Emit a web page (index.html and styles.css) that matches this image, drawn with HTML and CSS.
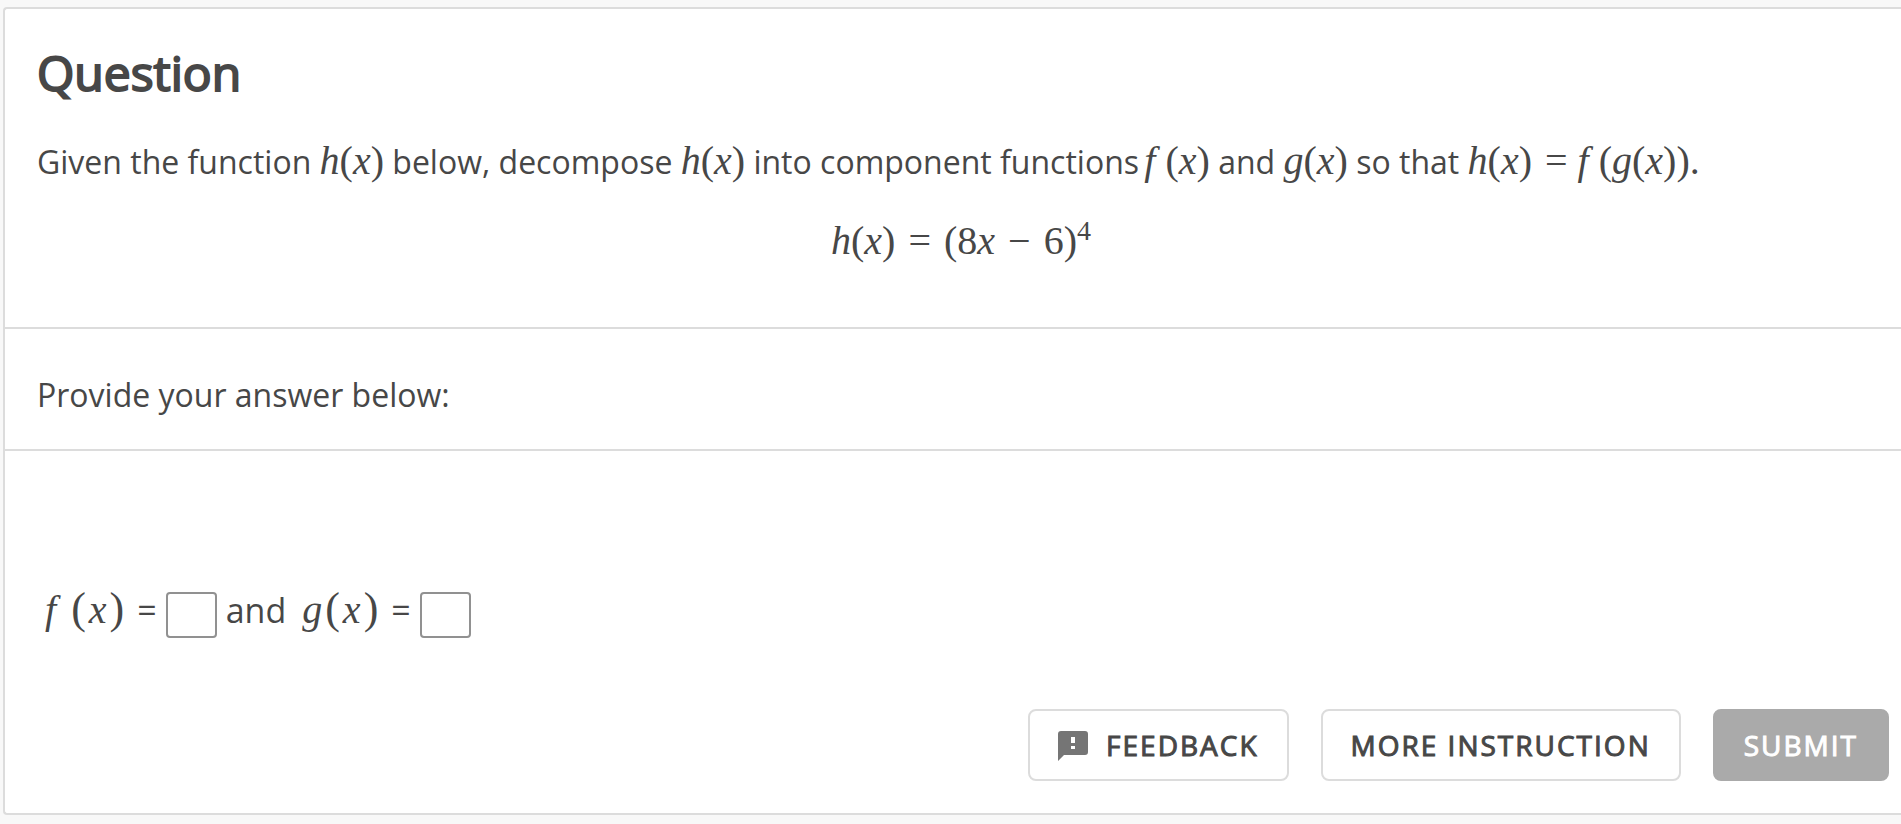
FILE: index.html
```html
<!DOCTYPE html>
<html lang="en">
<head>
<meta charset="utf-8">
<title>Question</title>
<link rel="stylesheet" href="styles.css">
</head>
<body>
<main class="card">
  <section class="question">
    <h1 class="title">Question</h1>
    <p class="prompt">Given the function <span class="math"><i>h</i>(<i>x</i>)</span> below, decompose <span class="math"><i>h</i>(<i>x</i>)</span> into component functions <span class="math"><i class="f">f</i>(<i>x</i>)</span> and <span class="math"><i>g</i>(<i>x</i>)</span> so that <span class="math"><i>h</i>(<i>x</i>) <span class="rel">=</span> <i class="f">f</i>(<i>g</i>(<i>x</i>)).</span></p>
    <p class="equation math"><i>h</i>(<i>x</i>) <span class="rel">=</span> (8<i>x</i> <span class="rel">−</span> 6)<sup>4</sup></p>
  </section>
  <section class="instruction">
    <p class="hint">Provide your answer below:</p>
  </section>
  <form class="answer">
    <div class="fields">
      <label class="fn" for="f-input"><span class="term"><i class="f">f</i><span class="paren">(</span><i>x</i><span class="paren">)</span></span><span class="eq">=</span></label>
      <input class="box" id="f-input" type="text">
      <span class="and">and</span>
      <label class="fn" for="g-input"><span class="term"><i>g</i><span class="paren">(</span><i>x</i><span class="paren">)</span></span><span class="eq">=</span></label>
      <input class="box" id="g-input" type="text">
    </div>
    <div class="actions">
      <button class="btn" type="button">
        <svg class="icon" viewBox="0 0 30 30" aria-hidden="true"><path fill="#757575" fill-rule="evenodd" d="M3 0H27Q30 0 30 3V21Q30 24 27 24H6L0 30V3Q0 0 3 0ZM13 6V12H17V6ZM13 15V18H17V15Z"/></svg>
        Feedback
      </button>
      <button class="btn" type="button">More Instruction</button>
      <button class="btn submit" type="submit" disabled>Submit</button>
    </div>
  </form>
</main>
</body>
</html>
```
FILE: styles.css
```css
* {
  box-sizing: border-box;
}

body {
  margin: 0;
  padding: 7px 0 9px 3px;
  background: #f8f8f8;
  color: #474747;
  font-family: "Open Sans", "Noto Sans", sans-serif;
  font-size: 32px;
  line-height: 48px;
}

.card {
  border: 2px solid #dcdcdc;
  border-right: 0;
  border-radius: 4px 0 0 4px;
  background: #fff;
}

.question {
  padding: 32px 16px 62px 32px;
  border-bottom: 2px solid #dcdcdc;
}

.title {
  margin: 0;
  font-size: 48px;
  font-weight: 400;
  line-height: 64px;
  -webkit-text-stroke: 2px currentColor;
}

.prompt {
  margin: 32px 0 31px;
}

.math,
.term {
  font-family: "Liberation Serif", serif;
  font-size: 40px;
  line-height: 48px;
}

.rel {
  margin: 0 3px;
}

.f {
  margin-right: 10px;
}

.prompt .f {
  margin-left: -3px;
}

.equation {
  margin: 0;
  text-align: center;
}

.equation sup {
  font-size: 28px;
  line-height: 0;
}

.instruction {
  padding: 42px 32px 30px;
  border-bottom: 2px solid #dcdcdc;
}

.hint {
  margin: 0;
}

.answer {
  padding: 134px 12px 32px 32px;
}

.fields {
  display: flex;
  align-items: baseline;
  padding-left: 8px;
  font-size: 34px;
}

.fn {
  display: flex;
  align-items: baseline;
}

.term {
  display: flex;
  align-items: baseline;
  gap: 3px;
}

.term .f {
  margin-right: 12px;
}

.paren {
  font-size: 44px;
}

.eq {
  margin: 0 9px 0 13px;
}

.and {
  margin: 0 16px 0 9px;
}

.box {
  align-self: flex-end;
  width: 51px;
  height: 46px;
  margin-bottom: -4px;
  padding: 0 4px;
  border: 2px solid #919191;
  border-radius: 4px;
  background: #fff;
  color: inherit;
  font: inherit;
}

.actions {
  display: flex;
  justify-content: flex-end;
  gap: 32px;
  margin-top: 75px;
}

.btn {
  display: flex;
  align-items: center;
  height: 72px;
  padding: 0 28px;
  border: 2px solid #dcdcdc;
  border-radius: 8px;
  background: #fff;
  color: #474747;
  font-family: inherit;
  font-size: 28px;
  font-weight: 400;
  letter-spacing: 2px;
  text-transform: uppercase;
  -webkit-text-stroke: 1px currentColor;
}

.icon {
  width: 30px;
  height: 30px;
  margin: 2px 18px 0 0;
}

.submit {
  padding: 0 29px;
  border-color: #aaa;
  background: #aaa;
  color: #fff;
}
```
